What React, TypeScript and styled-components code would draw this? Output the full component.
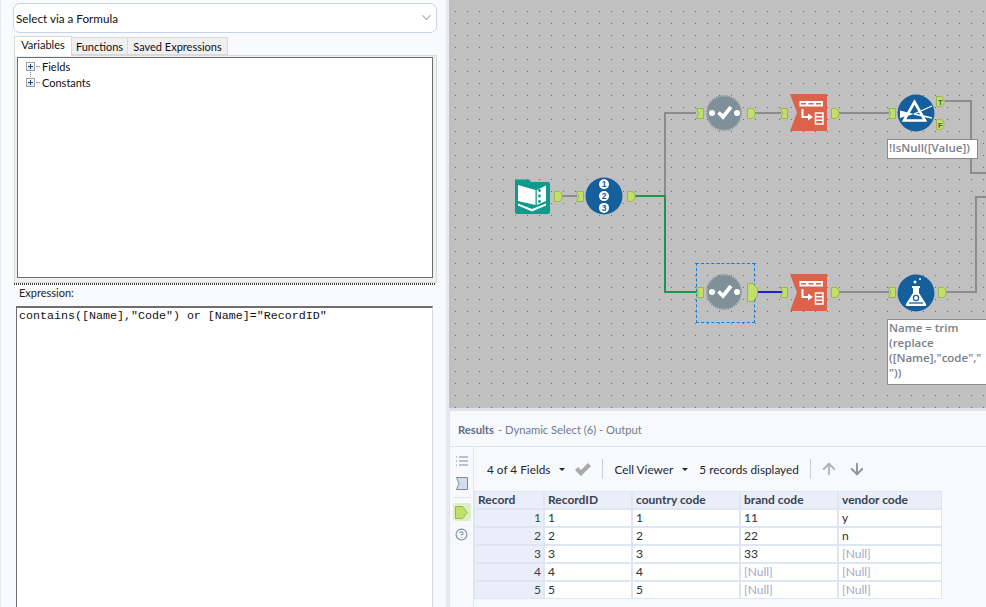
import React from "react";
import styled, { createGlobalStyle } from "styled-components";
import { ArrowUp, ArrowDown, ChevronDown, CircleHelp } from "lucide-react";

const GlobalStyle = createGlobalStyle`
  html, body { margin: 0; padding: 0; height: 100%; overflow: hidden; }
  body { font-family: Lato, "Open Sans", sans-serif; background: #f7f9fd; }
`;

const Page = styled.div`
  display: flex;
  width: 986px;
  height: 607px;
  overflow: hidden;
`;

const ConfigPanel = styled.aside`
  display: flex;
  flex-direction: column;
  box-sizing: border-box;
  width: 449px;
  flex: none;
  padding: 3px 9px 0 12px;
  background: #f8fafd;
  border-left: 1px solid #e3e9f3;
  border-right: 3px solid #e4e9f2;
`;

const SelectBox = styled.div`
  display: flex;
  align-items: center;
  justify-content: space-between;
  box-sizing: border-box;
  height: 30px;
  padding: 0 2px 1px 2px;
  background: #fff;
  border: 1px solid #c6d4e9;
  border-radius: 7px;
  font-size: 11.7px;
  color: #111;
`;

const TabRow = styled.div`
  display: flex;
  align-items: flex-end;
  height: 20px;
  margin-top: 2px;
  padding-left: 1px;
`;

const Tab = styled.div<{ $active?: boolean; $w: number }>`
  box-sizing: border-box;
  width: ${(p) => p.$w}px;
  height: ${(p) => (p.$active ? "20px" : "18px")};
  margin-bottom: ${(p) => (p.$active ? "-1px" : "0")};
  background: ${(p) => (p.$active ? "#fff" : "#f0f0f0")};
  border: 1px solid #d9d9d9;
  border-bottom: ${(p) => (p.$active ? "none" : "1px solid #d9d9d9")};
  border-left: ${(p) => (p.$active ? "1px solid #d9d9d9" : "none")};
  font-size: 11px;
  line-height: ${(p) => (p.$active ? "16px" : "17px")};
  text-align: center;
  color: #111;
  position: relative;
`;

const TabBody = styled.div`
  box-sizing: border-box;
  height: 228px;
  margin-left: 1px;
  padding: 1px 3px 4px 2px;
  background: #f0f0f0;
  border: 1px solid #d9d9d9;
`;

const TreeBox = styled.div`
  box-sizing: border-box;
  height: 100%;
  padding: 0 0 0 8px;
  background: #fff;
  border: 1px solid #6e6e6e;
`;

const TreeRow = styled.div<{ $linked?: boolean }>`
  position: relative;
  display: flex;
  align-items: center;
  height: 16px;
  font-size: 11px;
  color: #111;

  ${(p) =>
    p.$linked &&
    `&::before {
      content: "";
      position: absolute;
      left: 4px;
      top: -4px;
      height: 7px;
      border-left: 1px dotted #888;
    }`}
`;

const Expander = styled.span`
  position: relative;
  box-sizing: border-box;
  width: 9px;
  height: 9px;
  border: 1px solid #9aa0a8;
  background: linear-gradient(#fff, #dfe4ec);
  flex: none;

  &::before {
    content: "";
    position: absolute;
    left: 1px;
    top: 3px;
    width: 5px;
    height: 1px;
    background: #1f3f78;
  }
  &::after {
    content: "";
    position: absolute;
    left: 3px;
    top: 1px;
    width: 1px;
    height: 5px;
    background: #1f3f78;
  }
`;

const TreeDots = styled.span`
  width: 4px;
  margin: 0 2px 0 1px;
  border-top: 1px dotted #888;
  flex: none;
`;

const Splitter = styled.div`
  height: 2px;
  margin: 0 1px;
  background-image: repeating-linear-gradient(90deg, #444 0 1px, transparent 1px 2px);
`;

const ExpressionLabel = styled.div`
  margin-left: 6px;
  height: 21px;
  font-size: 11px;
  line-height: 16px;
  color: #222;
`;

const ExpressionBox = styled.div`
  flex: 1;
  margin: 0 0 0 3px;
  width: 417px;
  box-sizing: border-box;
  padding: 1px 2px;
  background: #fff;
  border-top: 2px solid #6e6e6e;
  border-left: 1px solid #6e6e6e;
  border-right: 1px solid #d4d8de;
  font-family: "Liberation Mono", monospace;
  font-size: 11.67px;
  line-height: 14px;
  color: #111;
`;

const MainColumn = styled.main`
  display: flex;
  flex-direction: column;
  flex: 1;
  min-width: 0;
`;

const Canvas = styled.section`
  position: relative;
  flex: none;
  height: 408px;
  overflow: hidden;
  background-color: #c0c0c0;
  background-image: radial-gradient(circle at 0.5px 0.5px, #6a6a6a 0.71px, transparent 0.72px);
  background-size: 12px 12px;
  background-position: 6px 11px;
`;

const Wires = styled.svg`
  position: absolute;
  left: 0;
  top: 0;
`;

const NodeIcon = styled.svg<{ $x: number; $y: number }>`
  position: absolute;
  left: ${(p) => p.$x - 449}px;
  top: ${(p) => p.$y}px;
`;

const SelectionBox = styled.div`
  position: absolute;
  left: 247px;
  top: 263px;
  width: 57px;
  height: 58px;
  border: 1px dashed #1a7fd6;
`;

const Annotation = styled.div<{ $x: number; $y: number; $w: number; $h: number }>`
  position: absolute;
  left: ${(p) => p.$x - 449}px;
  top: ${(p) => p.$y}px;
  width: ${(p) => p.$w}px;
  height: ${(p) => p.$h}px;
  box-sizing: border-box;
  padding: 0 1px;
  background: #fff;
  border: 1px solid #8a8a8a;
  font-family: "Open Sans", sans-serif;
  font-size: 11.5px;
  font-weight: 600;
  line-height: 15px;
  color: #7a8088;
  white-space: pre;
`;

const ResultsPanel = styled.section`
  display: flex;
  flex-direction: column;
  flex: 1;
  min-height: 0;
  background: #f7f9fd;
  border-top: 3px solid #dde4ef;
  border-left: 1px solid #dfe5f0;
`;

const ResultsHeader = styled.header`
  display: flex;
  align-items: center;
  flex: none;
  box-sizing: border-box;
  height: 36px;
  padding: 2px 8px 0;
  border-bottom: 1px solid #dfe5f0;
  font-size: 11.2px;
  color: #6f7c91;
`;

const HeaderTitle = styled.strong`
  font-weight: 700;
  color: #5f6d84;
  margin-right: 4px;
`;

const ResultsBody = styled.div`
  display: flex;
  flex: 1;
  min-height: 0;
`;

const SideRail = styled.nav`
  display: flex;
  flex-direction: column;
  align-items: center;
  flex: none;
  box-sizing: border-box;
  width: 24px;
  padding-top: 5px;
  border-right: 1px solid #dfe5f0;
`;

const RailButton = styled.div<{ $active?: boolean }>`
  display: flex;
  align-items: center;
  justify-content: center;
  width: 18px;
  height: 18px;
  margin-bottom: 4px;
  border-radius: 3px;
  background: ${(p) => (p.$active ? "#dcefc8" : "transparent")};
`;

const RailRule = styled.div`
  width: 18px;
  height: 1px;
  margin: 1px 0 5px;
  background: #dfe5f0;
`;

const ResultsContent = styled.div`
  display: flex;
  flex-direction: column;
  flex: 1;
  min-width: 0;
`;

const Toolbar = styled.div`
  display: flex;
  align-items: center;
  flex: none;
  height: 44px;
  padding-left: 13px;
  font-size: 11.8px;
  color: #23272e;
`;

const ToolText = styled.span`
  white-space: nowrap;
`;

const Caret = styled.span<{ $gap: number }>`
  width: 0;
  height: 0;
  margin: 0 ${(p) => p.$gap}px 0 9px;
  border-left: 3px solid transparent;
  border-right: 3px solid transparent;
  border-top: 3px solid #222;
`;

const ToolRule = styled.span`
  width: 1px;
  height: 20px;
  margin: 0 11px;
  background: #c9ced6;
`;

const UpArrow = styled(ArrowUp)`
  margin-left: -2px;
`;

const ToolGap = styled.span`
  width: 10px;
`;

const DataGrid = styled.div`
  display: grid;
  grid-template-columns: 68px 86px 106px 96px 102px;
  grid-auto-rows: 16px;
  gap: 2px;
  width: max-content;
  padding: 1px;
  background: #dfe6f3;
  font-size: 12px;
`;

const HeadCell = styled.div`
  padding-left: 3px;
  background: #e9eef8;
  font-weight: 700;
  line-height: 16px;
  color: #3a4252;
`;

const RowNumber = styled.div`
  padding-right: 2px;
  background: #e9eef8;
  text-align: right;
  line-height: 16px;
  color: #3a4252;
`;

const Cell = styled.div<{ $null?: boolean }>`
  padding-left: 3px;
  background: #fff;
  line-height: 16px;
  color: ${(p) => (p.$null ? "#a3a9c4" : "#2a2f38")};
`;

const InAnchor = ({ x, y }: { x: number; y: number }) => (
  <NodeIcon $x={x} $y={y} width={8} height={11} viewBox="0 0 8 11">
    <path d="M.5.5h7v10h-7l2.200-5z" fill="#c4de6c" stroke="#9ab84a" />
  </NodeIcon>
);

const OutAnchor = ({ x, y, label, big }: { x: number; y: number; label?: string; big?: boolean }) => (
  <NodeIcon $x={x} $y={y} width={big ? 11 : 10} height={big ? 19 : 11} viewBox={big ? "0 0 11 19" : "0 0 10 11"}>
    <path
      d={big ? "M.5.5h5.500l4.500 6v6l-4.500 6H.5z" : "M.5.5h4c2.500 0 3.500 2.500 3.500 5s-1 5-3.500 5h-4z"}
      fill="#c4de6c"
      stroke="#9ab84a"
    />
    {label && (
      <text x="4.200" y="8.500" fontSize="7.500" fontWeight="700" textAnchor="middle" fill="#3c5c4c" fontFamily="Liberation Sans">
        {label}
      </text>
    )}
  </NodeIcon>
);

const BookTool = ({ x, y }: { x: number; y: number }) => (
  <NodeIcon $x={x} $y={y} width={37} height={36} viewBox="0 0 37 36">
    <path d="M1 2q0-1.500 1.500-1.500H15l2 2.500h17q2 0 2 2v28q0 2-2 2H3q-2 0-2-2z" fill="#0f9a8c" />
    <path d="M4 6l17.500 5v15L4 22zM32 6.500l-9.200 4.500v15l9.200-4z" fill="#fff" />
    <path d="M4 24.500l14 5.500 14-5.500v2L18 32.500 4 26.500z" fill="#fff" />
    <circle cx="25.500" cy="11.500" r="1.400" fill="#0f9a8c" />
    <circle cx="25.500" cy="17" r="1.400" fill="#0f9a8c" />
    <circle cx="25.500" cy="22.500" r="1.400" fill="#0f9a8c" />
  </NodeIcon>
);

const RecordIdTool = ({ x, y }: { x: number; y: number }) => (
  <NodeIcon $x={x} $y={y} width={38} height={38} viewBox="0 0 38 38">
    <circle cx="19" cy="19" r="18.500" fill="#15609c" />
    {["1", "2", "3"].map((n, i) => (
      <g key={n}>
        <circle cx="19" cy={7.300 + i * 11.800} r="5" fill="#fff" />
        <text x="19" y={10.300 + i * 11.800} fontSize="8.500" fontWeight="700" textAnchor="middle" fill="#15609c" fontFamily="Liberation Sans">
          {n}
        </text>
      </g>
    ))}
  </NodeIcon>
);

const DynamicSelectTool = ({ x, y }: { x: number; y: number }) => (
  <NodeIcon $x={x} $y={y} width={38} height={38} viewBox="0 0 38 38">
    <circle cx="19" cy="19" r="16.800" fill="#7f9099" />
    <circle cx="19" cy="19" r="17.300" fill="none" stroke="#7f9099" strokeWidth="1.400" strokeDasharray="1.100 1.100" />
    <circle cx="7" cy="19" r="3" fill="#fff" />
    <circle cx="32" cy="19" r="3" fill="#fff" />
    <path d="M13.500 18.500l4.500 4.500 8-10" fill="none" stroke="#fff" strokeWidth="3.800" />
  </NodeIcon>
);

const DynamicRenameTool = ({ x, y }: { x: number; y: number }) => (
  <NodeIcon $x={x} $y={y} width={38} height={38} viewBox="0 0 38 38">
    <path d="M0 0h37v37H0l7-18.500z" fill="#dc6249" />
    <path d="M9.500 7h23.500v5.500H9.500z" fill="#fff" />
    <path d="M11 9.700h5M18.500 9.700h5M26 9.700h5" stroke="#dc6249" strokeWidth="1.400" />
    <path d="M12.500 15v8h7" fill="none" stroke="#fff" strokeWidth="2" />
    <path d="M18 19.500l5 3.500-5 3.500z" fill="#fff" />
    <path d="M25.500 19h7.500v11h-7.500zM25.500 22.700h7.500M25.500 26.300h7.500" fill="none" stroke="#fff" strokeWidth="1.500" />
  </NodeIcon>
);

const FilterTool = ({ x, y }: { x: number; y: number }) => (
  <NodeIcon $x={x} $y={y} width={38} height={38} viewBox="0 0 38 38">
    <circle cx="19" cy="19" r="18.500" fill="#15609c" />
    <path d="M17.500 8L7 26.500h21z" fill="none" stroke="#fff" strokeWidth="2.600" />
    <path d="M3 16.500l14 3.500-14 4z" fill="#fff" />
    <path d="M17 20l18-8M17 20l18 4" stroke="#fff" strokeWidth="1.300" />
  </NodeIcon>
);

const FormulaTool = ({ x, y }: { x: number; y: number }) => (
  <NodeIcon $x={x} $y={y} width={38} height={38} viewBox="0 0 38 38">
    <circle cx="19" cy="19" r="18.500" fill="#15609c" />
    <path d="M15 12h8v2h-1v5l7 11q1 2-2 2H11q-3 0-2-2l7-11v-5h-1z" fill="#fff" />
    <circle cx="19" cy="24" r="2.600" fill="none" stroke="#15609c" strokeWidth="1.300" />
    <path d="M12 29h14" stroke="#15609c" strokeWidth="1.300" />
    <circle cx="18" cy="8" r="1.500" fill="#fff" />
    <circle cx="23" cy="5" r="1" fill="#fff" />
  </NodeIcon>
);

const columns = ["Record", "RecordID", "country code", "brand code", "vendor code"];
const rows = [
  ["1", "1", "11", "y"],
  ["2", "2", "22", "n"],
  ["3", "3", "33", "[Null]"],
  ["4", "4", "[Null]", "[Null]"],
  ["5", "5", "[Null]", "[Null]"],
];

export default function App() {
  return (
    <Page>
      <GlobalStyle />
      <ConfigPanel>
        <SelectBox>
          Select via a Formula
          <ChevronDown size={15} color="#a9b2c0" />
        </SelectBox>
        <TabRow>
          <Tab $active $w={58}>Variables</Tab>
          <Tab $w={56}>Functions</Tab>
          <Tab $w={100}>Saved Expressions</Tab>
        </TabRow>
        <TabBody>
          <TreeBox>
            <TreeRow>
              <Expander />
              <TreeDots />
              Fields
            </TreeRow>
            <TreeRow $linked>
              <Expander />
              <TreeDots />
              Constants
            </TreeRow>
          </TreeBox>
        </TabBody>
        <Splitter />
        <ExpressionLabel>Expression:</ExpressionLabel>
        <ExpressionBox>contains([Name],"Code") or [Name]="RecordID"</ExpressionBox>
      </ConfigPanel>
      <MainColumn>
        <Canvas>
          <Wires width={537} height={408} viewBox="449 0 537 408" fill="none" strokeWidth="2">
            <g stroke="#8c8c8c">
              <path d="M561 196h16" />
              <path d="M696 113h-31v83" />
              <path d="M753 113h28M838 113h51M945 101h26v72h15" />
              <path d="M838 292h51M946 292h30v-95h10" />
            </g>
            <path d="M633 196h32v96h32" stroke="#22934a" />
            <path d="M757 292h27" stroke="#2222cc" />
          </Wires>
          <SelectionBox />
          <BookTool x={514} y={179} />
          <OutAnchor x={554} y={191} />
          <InAnchor x={576} y={191} />
          <RecordIdTool x={585} y={177} />
          <OutAnchor x={627} y={191} />

          <InAnchor x={696} y={108} />
          <DynamicSelectTool x={705} y={94} />
          <OutAnchor x={747} y={108} />
          <InAnchor x={780} y={108} />
          <DynamicRenameTool x={790} y={94} />
          <OutAnchor x={831} y={108} />
          <InAnchor x={888} y={108} />
          <FilterTool x={897} y={94} />
          <OutAnchor x={936} y={96} label="T" />
          <OutAnchor x={936} y={119} label="F" />
          <Annotation $x={887} $y={139} $w={91} $h={20}>
            !IsNull([Value])
          </Annotation>

          <InAnchor x={696} y={287} />
          <DynamicSelectTool x={705} y={273} />
          <OutAnchor x={747} y={283} big />
          <InAnchor x={780} y={287} />
          <DynamicRenameTool x={790} y={274} />
          <OutAnchor x={831} y={287} />
          <InAnchor x={888} y={287} />
          <FormulaTool x={897} y={274} />
          <OutAnchor x={938} y={287} />
          <Annotation $x={887} $y={319} $w={104} $h={66}>
            {'Name = trim\n(replace\n([Name],"code","\n"))'}
          </Annotation>
        </Canvas>
        <ResultsPanel>
          <ResultsHeader>
            <HeaderTitle>Results</HeaderTitle>- Dynamic Select (6) - Output
          </ResultsHeader>
          <ResultsBody>
            <SideRail>
              <RailButton>
                <svg width="14" height="12" viewBox="0 0 14 12" fill="none" stroke="#7c8aa0">
                  <path d="M1 2h1M1 6h1M1 10h1M4 2h9M4 6h9M4 10h9" />
                </svg>
              </RailButton>
              <RailButton>
                <svg width="12" height="13" viewBox="0 0 12 13">
                  <path d="M.5.5h11v12H.5l2.500-6z" fill="#d4dcea" stroke="#7c8aa0" />
                </svg>
              </RailButton>
              <RailRule />
              <RailButton $active>
                <svg width="13" height="13" viewBox="0 0 13 13">
                  <path d="M.5.5h7l5 6-5 6h-7z" fill="#c4de6c" stroke="#9ab84a" />
                </svg>
              </RailButton>
              <RailButton>
                <CircleHelp size={13} color="#7c8aa0" />
              </RailButton>
            </SideRail>
            <ResultsContent>
              <Toolbar>
                <ToolText>4 of 4 Fields</ToolText>
                <Caret $gap={9} />
                <svg width="17" height="14" viewBox="0 0 17 14">
                  <path d="M1 8l3-3 3 3 7-7 3 3-10 10z" fill="#a9a9a9" />
                </svg>
                <ToolRule />
                <ToolText>Cell Viewer</ToolText>
                <Caret $gap={11} />
                <ToolText>5 records displayed</ToolText>
                <ToolRule />
                <UpArrow size={18} color="#b0b4ba" strokeWidth={2.500} />
                <ToolGap />
                <ArrowDown size={18} color="#8d939c" strokeWidth={2.500} />
              </Toolbar>
              <DataGrid>
                {columns.map((c) => (
                  <HeadCell key={c}>{c}</HeadCell>
                ))}
                {rows.map((r, i) => (
                  <React.Fragment key={i}>
                    <RowNumber>{i + 1}</RowNumber>
                    {r.map((v, j) => (
                      <Cell key={j} $null={v === "[Null]"}>
                        {v}
                      </Cell>
                    ))}
                  </React.Fragment>
                ))}
              </DataGrid>
            </ResultsContent>
          </ResultsBody>
        </ResultsPanel>
      </MainColumn>
    </Page>
  );
}
